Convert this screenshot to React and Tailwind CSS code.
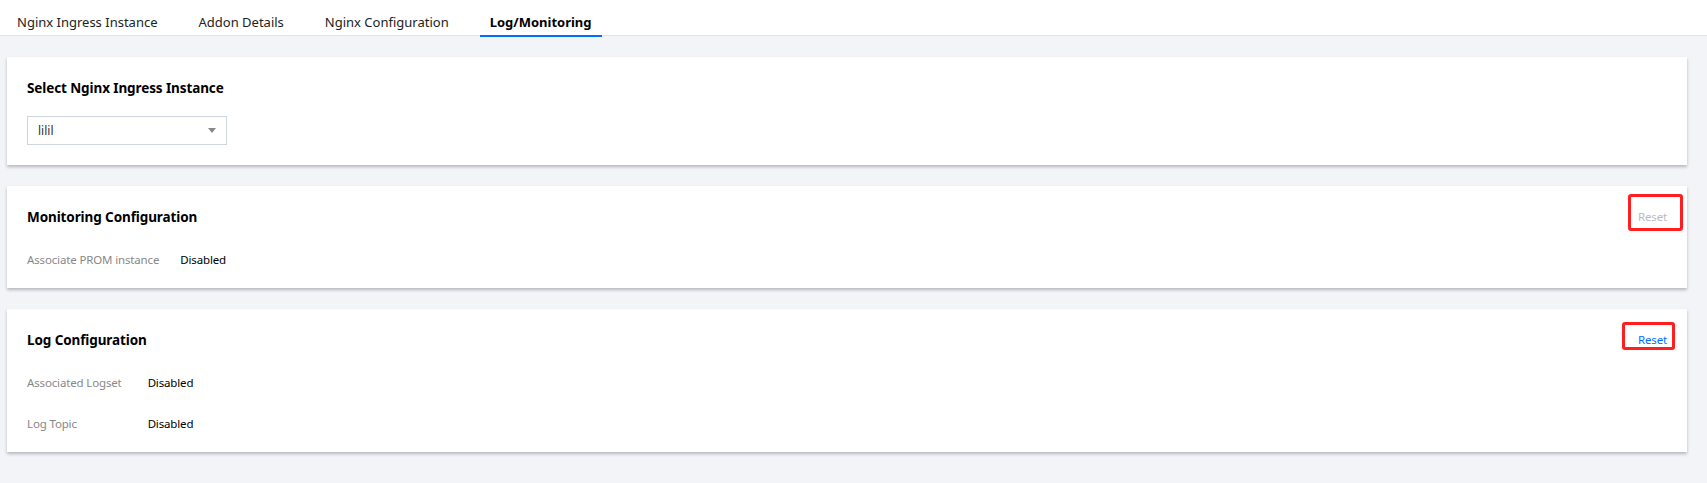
import React from 'react';

const tabs = ['Nginx Ingress Instance', 'Addon Details', 'Nginx Configuration', 'Log/Monitoring'];

const font = { fontFamily: '"Noto Sans", "Open Sans", Arial, sans-serif' };

// red annotation box drawn round the reset links
const ResetLink = ({ disabled, boxClass }) => (
  <div className="relative">
    <span
      className={`block text-[11.5px] tracking-[-0.15px] leading-[20px] ${disabled ? 'text-[#bbbbbb]' : 'text-[#006eff] cursor-pointer'}`}
    >
      Reset
    </span>
    <span className={`absolute border-[3px] border-[#ff1f1f] rounded-[3px] ${boxClass}`} />
  </div>
);

const Row = ({ label, value }) => (
  <>
    <div className="text-[11.5px] tracking-[-0.15px] leading-[20px] text-[#888888]">{label}</div>
    <div className="text-[11.5px] tracking-[-0.15px] leading-[20px] text-black">{value}</div>
  </>
);

const Card = ({ children, className = '' }) => (
  <div className={`bg-white shadow-[0_2px_3px_0_rgba(54,58,80,0.32)] px-5 pt-5 ${className}`}>
    {children}
  </div>
);

const Title = ({ children }) => (
  <h3 className="text-[13.5px] tracking-[-0.1px] leading-[22px] font-bold text-black">{children}</h3>
);

export default function App() {
  return (
    <div className="min-h-screen bg-[#f3f4f7]" style={font}>
      {/* tab bar */}
      <div className="h-[36px] bg-white border-b border-[#e2e4ea] flex items-start pl-[7px] gap-[21px]">
        {tabs.map((t, i) => {
          const active = i === tabs.length - 1;
          return (
            <div
              key={t}
              className={`px-[10px] h-[37px] pt-[12px] leading-[20px] text-[13px] border-b-2 ${
                active ? 'font-bold text-black border-[#006eff]' : 'text-[#222222] border-transparent'
              }`}
            >
              {t}
            </div>
          );
        })}
      </div>

      {/* content */}
      <div className="pt-[21px] pl-[7px] pr-5 flex flex-col gap-[21px]">
        <Card className="pb-5">
          <Title>Select Nginx Ingress Instance</Title>
          <div className="mt-[17px] w-[200px] h-[29px] border border-[#cfd5de] flex items-center justify-between pl-[10px] pr-[10px]">
            <span className="text-[12px] text-[#333333]">lilil</span>
            <svg width="8" height="5" viewBox="0 0 8 5">
              <path d="M0 0 L8 0 L4 5 Z" fill="#888888" />
            </svg>
          </div>
        </Card>

        <Card className="pb-[18px]">
          <div className="flex items-center justify-between h-[22px]">
            <Title>Monitoring Configuration</Title>
            <ResetLink disabled boxClass="-top-[13px] -bottom-[4px] -left-[10px] -right-[16px]" />
          </div>
          <div className="mt-[22px] grid grid-cols-[auto_1fr] gap-x-[21px] gap-y-[21px]">
            <Row label="Associate PROM instance" value="Disabled" />
          </div>
        </Card>

        <Card className="pb-[18px]">
          <div className="flex items-center justify-between h-[22px]">
            <Title>Log Configuration</Title>
            <ResetLink boxClass="-top-[8px] bottom-0 -left-[16px] -right-[8px]" />
          </div>
          <div className="mt-[22px] grid grid-cols-[auto_1fr] gap-x-[26px] gap-y-[21px]">
            <Row label="Associated Logset" value="Disabled" />
            <Row label="Log Topic" value="Disabled" />
          </div>
        </Card>
      </div>
    </div>
  );
}
